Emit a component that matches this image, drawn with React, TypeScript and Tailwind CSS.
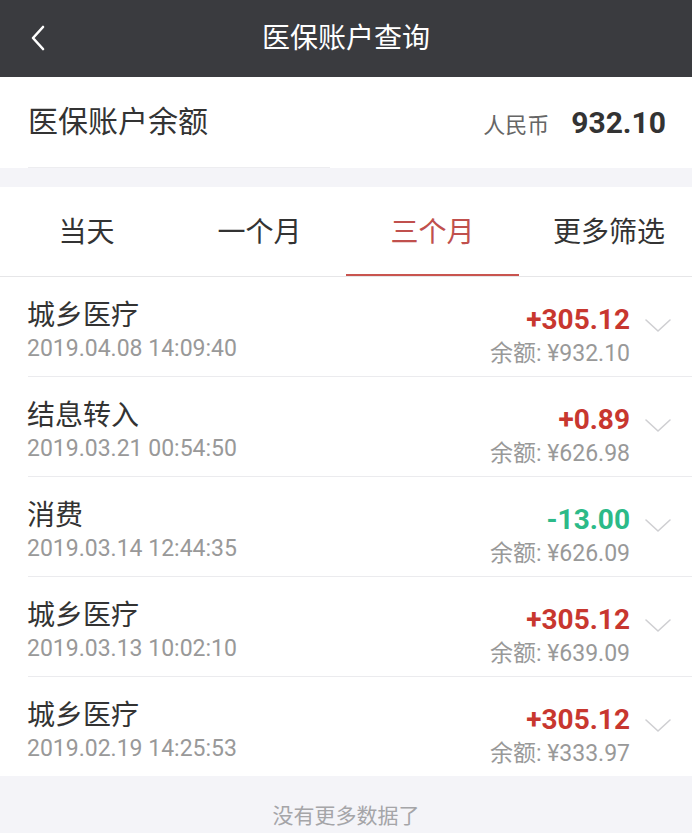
const records = [
  { title: '城乡医疗', time: '2019.04.08 14:09:40', amount: '+305.12', balance: '932.10' },
  { title: '结息转入', time: '2019.03.21 00:54:50', amount: '+0.89', balance: '626.98' },
  { title: '消费', time: '2019.03.14 12:44:35', amount: '-13.00', balance: '626.09' },
  { title: '城乡医疗', time: '2019.03.13 10:02:10', amount: '+305.12', balance: '639.09' },
  { title: '城乡医疗', time: '2019.02.19 14:25:53', amount: '+305.12', balance: '333.97' },
];

const tabs = ['当天', '一个月', '三个月', '更多筛选'];

function ChevronDown() {
  return (
    <svg width="28" height="16" viewBox="0 0 28 16" fill="none">
      <path d="M2 2 L14 13 L26 2" stroke="#cfcfd2" strokeWidth="1.6" strokeLinecap="round" strokeLinejoin="round" />
    </svg>
  );
}

export default function App() {
  return (
    <div
      className="w-[699px] h-[833px] bg-white overflow-hidden"
      style={{ fontFamily: 'Roboto, "Noto Sans CJK SC", sans-serif' }}
    >
      <div className="w-[692px] h-full flex flex-col bg-[#f4f4f8]">
        {/* Header */}
        <div className="h-[77px] bg-[#3a3b3f] flex items-center relative">
          <svg className="absolute left-[28px] top-[25px]" width="20" height="26" viewBox="0 0 20 26" fill="none">
            <path d="M15 2 L5 13 L15 24" stroke="white" strokeWidth="2.6" strokeLinecap="round" strokeLinejoin="round" />
          </svg>
          <div className="w-full text-center text-white text-[28px] leading-none">医保账户查询</div>
        </div>

        {/* Balance */}
        <div className="h-[91px] bg-white flex flex-col">
          <div className="flex-1 flex items-center justify-between pl-[28px] pr-[26px]">
            <div className="text-[30px] text-[#333] leading-none">医保账户余额</div>
            <div className="flex items-baseline gap-[22px]">
              <span className="text-[22px] text-[#666]">人民币</span>
              <span className="text-[30px] font-bold text-[#333]">932.10</span>
            </div>
          </div>
          <div className="ml-[28px] w-[302px] h-px bg-[#ededf0]" />
        </div>

        <div className="h-[19px]" />

        {/* Tabs */}
        <div className="h-[90px] bg-white grid grid-cols-4 border-b border-[#e6e6e8]">
          {tabs.map((t, i) => (
            <div key={t} className="flex flex-col items-center">
              <div
                className={`flex-1 flex items-center pt-[4px] text-[28px] leading-none ${
                  i === 2 ? 'text-[#c0504d]' : 'text-[#333]'
                } ${i === 3 ? 'pl-[7px]' : ''}`}
              >
                {t}
              </div>
              <div className={`h-[2px] w-full ${i === 2 ? 'bg-[#c9544f]' : 'bg-transparent'}`} />
            </div>
          ))}
        </div>

        {/* Records */}
        <div className="bg-white flex flex-col">
          {records.map((r, i) => (
            <div key={i} className="flex flex-col">
              <div className="h-[99px] flex items-center pl-[27px] pr-[20px]">
                <div className="flex-1 flex flex-col gap-[7px] pt-[8px]">
                  <div className="text-[28px] text-[#333] leading-none">{r.title}</div>
                  <div className="text-[23px] text-[#999] leading-none">{r.time}</div>
                </div>
                <div className="flex flex-col items-end gap-[8px] pt-[17px]">
                  <div
                    className={`text-[28px] font-bold leading-none ${
                      r.amount.startsWith('-') ? 'text-[#2cba88]' : 'text-[#c8372f]'
                    }`}
                  >
                    {r.amount}
                  </div>
                  <div className="text-[23px] text-[#999] leading-none">余额: ¥{r.balance}</div>
                </div>
                <div className="ml-[14px] -mt-[2px]">
                  <ChevronDown />
                </div>
              </div>
              {i < records.length - 1 && <div className="ml-[28px] h-px bg-[#ebebee]" />}
            </div>
          ))}
        </div>

        {/* Footer */}
        <div className="flex-1 flex items-end justify-center">
          <div className="text-[21px] leading-none pb-[6px] text-[#a5a5a8]">没有更多数据了</div>
        </div>
      </div>
    </div>
  );
}
